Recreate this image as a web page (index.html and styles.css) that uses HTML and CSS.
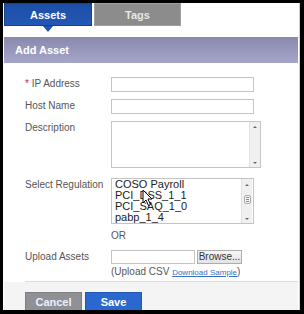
FILE: index.html
```html
<!DOCTYPE html>
<html>
<head>
<meta charset="utf-8">
<link rel="stylesheet" href="styles.css">
</head>
<body>
<div class="frame">
  <div class="panel">
    <div class="tabs">
      <div class="tab tab-active">Assets</div>
      <div class="tab tab-idle">Tags</div>
    </div>
    <div class="header">Add Asset</div>
    <div class="form">
      <div class="row r1">
        <div class="label"><span class="req">*</span> IP Address</div>
        <div class="input w143"></div>
      </div>
      <div class="row r2">
        <div class="label">Host Name</div>
        <div class="input w143"></div>
      </div>
      <div class="row r3">
        <div class="label">Description</div>
        <div class="textarea">
          <div class="ta-body"></div>
          <div class="sb">
            <span class="sb-up"></span>
            <span class="sb-down"></span>
          </div>
        </div>
      </div>
      <div class="row r4">
        <div class="label">Select Regulation</div>
        <div class="listbox">
          <div class="lb-items">
            <div>COSO Payroll</div>
            <div>PCI_DSS_1_1</div>
            <div>PCI_SAQ_1_0</div>
            <div>pabp_1_4</div>
          </div>
          <div class="sb sb-list">
            <span class="sb-up"></span>
            <span class="sb-thumb"><i></i><i></i><i></i></span>
            <span class="sb-down"></span>
          </div>
          <svg class="cursor" width="12" height="18" viewBox="0 0 12 18"><path d="M1 1 L1 14 L4 11 L6.5 16.5 L8.5 15.5 L6 10 L10 10 Z" fill="#fff" stroke="#000" stroke-width="1" stroke-linejoin="round"/></svg>
        </div>
      </div>
      <div class="row r5">
        <div class="label"></div>
        <div class="or">OR</div>
      </div>
      <div class="row r6">
        <div class="label">Upload Assets</div>
        <div class="upload">
          <div class="upload-line">
            <div class="input file"></div>
            <div class="browse">Browse...</div>
          </div>
          <div class="help">(Upload CSV <a class="link">Download Sample</a>)</div>
        </div>
      </div>
      <div class="sep"></div>
    </div>
    <div class="footer">
      <div class="btn btn-cancel">Cancel</div>
      <div class="btn btn-save">Save</div>
    </div>
  </div>
</div>
</body>
</html>
```
FILE: styles.css
```css
html, body {
  margin: 0;
  padding: 0;
  background: #000;
}
.frame {
  width: 304px;
  height: 314px;
  padding: 3px 4px 4px 3px;
  box-sizing: border-box;
  font-family: "Liberation Sans", Arial, sans-serif;
}
.panel {
  height: 307px;
  background: #fff;
  padding: 0 1px;
  box-sizing: border-box;
  overflow: hidden;
  border-right: 1px solid #cfcfcf;
}
.tabs {
  display: flex;
  gap: 2px;
  height: 23px;
}
.tab {
  height: 23px;
  box-sizing: border-box;
  display: flex;
  align-items: center;
  justify-content: center;
  font-size: 11px;
  font-weight: bold;
  position: relative;
}
.tab-active {
  width: 88px;
  background: linear-gradient(#1c4ea6, #2358b6);
  border: 1px solid #163f8c;
  color: #fff;
}
.tab-active::after {
  content: "";
  position: absolute;
  left: 38px;
  top: 22px;
  border-left: 5px solid transparent;
  border-right: 5px solid transparent;
  border-top: 6px solid #1f52ab;
}
.tab-idle {
  width: 87px;
  background: #8c8c8c;
  border: 1px solid #a0a0a0;
  color: #e6e6e6;
}
.header {
  margin-top: 11px;
  height: 26px;
  background: linear-gradient(#8989ad, #a6a6cb);
  color: #fff;
  font-size: 11px;
  font-weight: bold;
  line-height: 26px;
  padding-left: 11px;
}
.form {
  padding: 14px 0 0 21px;
}
.row {
  display: flex;
  align-items: flex-start;
}
.label {
  width: 86px;
  flex: none;
  font-size: 10px;
  color: #555;
  line-height: 14px;
}
.req {
  color: #d22;
}
.r2 { margin-top: 7px; }
.r3 { margin-top: 7px; }
.r4 { margin-top: 10px; }
.r5 { margin-top: 5px; }
.r6 { margin-top: 8px; }
.input {
  height: 15px;
  box-sizing: border-box;
  border: 1px solid #c4c4c4;
  background: #fff;
}
.w143 { width: 143px; }
.textarea {
  width: 150px;
  height: 47px;
  box-sizing: border-box;
  border: 1px solid #c4c4c4;
  display: flex;
}
.ta-body { flex: 1; }
.sb {
  width: 11px;
  background: #f0f0f0;
  border-left: 1px solid #e2e2e2;
  display: flex;
  flex-direction: column;
  align-items: center;
  justify-content: space-between;
  padding: 4px 0 3px;
  box-sizing: border-box;
}
.sb-up {
  width: 0;
  height: 0;
  border-left: 2px solid transparent;
  border-right: 2px solid transparent;
  border-bottom: 2px solid #666;
}
.sb-down {
  width: 0;
  height: 0;
  border-left: 2px solid transparent;
  border-right: 2px solid transparent;
  border-top: 2px solid #666;
}
.listbox {
  width: 143px;
  height: 46px;
  box-sizing: border-box;
  border: 1px solid #c4c4c4;
  display: flex;
  position: relative;
}
.lb-items {
  flex: 1;
  font-size: 11px;
  color: #222;
  line-height: 11px;
  padding: 0 0 0 3px;
  overflow: hidden;
}
.sb-list {
  margin-right: 1px;
  padding-top: 5px;
}
.sb-thumb {
  width: 7px;
  height: 9px;
  border: 1px solid #aaa;
  border-radius: 2px;
  background: #f6f6f6;
  box-sizing: border-box;
  display: flex;
  flex-direction: column;
  justify-content: center;
  gap: 1px;
  align-items: center;
  margin-top: -6px;
}
.sb-thumb i {
  display: block;
  width: 3px;
  height: 1px;
  background: #888;
}
.cursor {
  position: absolute;
  left: 30px;
  top: 10px;
}
.or {
  font-size: 10px;
  color: #555;
  line-height: 13px;
}
.upload-line {
  display: flex;
  gap: 2px;
}
.file {
  width: 84px;
  height: 14px;
}
.browse {
  width: 45px;
  height: 14px;
  box-sizing: border-box;
  border: 1px solid #adadad;
  background: linear-gradient(#f6f6f6, #e3e3e3);
  font-size: 10px;
  color: #333;
  text-align: center;
  line-height: 12px;
}
.help {
  font-size: 10px;
  color: #555;
  line-height: 13px;
  margin-top: 1px;
}
.link {
  color: #3a6fc8;
  text-decoration: underline;
  font-size: 8px;
}
.sep {
  margin-top: 2px;
  height: 1px;
  background: #dcdcdc;
}
.footer {
  background: #f4f4f4;
  height: 40px;
  padding: 10px 0 0 21px;
  box-sizing: border-box;
  display: flex;
  gap: 3px;
  align-items: flex-start;
}
.btn {
  width: 57px;
  height: 22px;
  box-sizing: border-box;
  color: #fff;
  font-size: 11px;
  font-weight: bold;
  text-align: center;
  line-height: 18px;
}
.btn-cancel {
  background: #8f9195;
  border: 1px solid #7d7f83;
  color: #eef;
}
.btn-save {
  background: #2a68cf;
  border: 1px solid #1f58b8;
}
```
